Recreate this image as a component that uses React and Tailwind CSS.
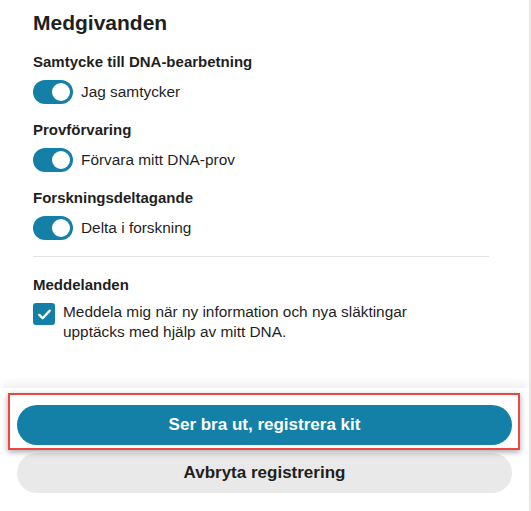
import React, { useState } from 'react';

function Toggle({ on, onClick }) {
  return (
    <button
      type="button"
      onClick={onClick}
      className={`relative flex h-[24px] w-[40px] shrink-0 items-center rounded-full px-[3px] ${
        on ? 'justify-end bg-[#1480a7]' : 'justify-start bg-[#c9c9c9]'
      }`}
    >
      <span className="block h-[18px] w-[18px] rounded-full bg-white" />
    </button>
  );
}

export default function App() {
  const [consent, setConsent] = useState({ dna: true, sample: true, research: true });
  const [notify, setNotify] = useState(true);

  const flip = (key) => setConsent((prev) => ({ ...prev, [key]: !prev[key] }));

  const items = [
    { key: 'dna', title: 'Samtycke till DNA-bearbetning', label: 'Jag samtycker' },
    { key: 'sample', title: 'Provförvaring', label: 'Förvara mitt DNA-prov' },
    { key: 'research', title: 'Forskningsdeltagande', label: 'Delta i forskning' },
  ];

  return (
    <div
      className="flex h-[511px] w-[531px] bg-[#ede8e2] text-[#1f1f1f]"
      style={{ fontFamily: '"Liberation Sans", Arial, sans-serif' }}
    >
      <div className="flex h-full w-[529px] flex-col bg-white">
        {/* Consent section */}
        <div className="flex-1 px-[33px] pt-[9px]">
          <h1 className="text-[21px] font-bold leading-[28px]">Medgivanden</h1>

          <div className="mt-[16px] flex flex-col gap-[17px]">
            {items.map((item) => (
              <div key={item.key}>
                <p className="text-[15px] font-bold leading-[18px]">{item.title}</p>
                <div className="mt-[9px] flex items-center gap-[8px]">
                  <Toggle on={consent[item.key]} onClick={() => flip(item.key)} />
                  <span className="text-[15.4px] leading-[20px]">{item.label}</span>
                </div>
              </div>
            ))}
          </div>

          <div className="mt-[16px] mr-[7px] h-px bg-[#e3e3e3]" />

          <p className="mt-[19px] text-[15px] font-bold leading-[18px]">Meddelanden</p>
          <label className="mt-[8px] flex cursor-pointer items-start gap-[8px]">
            <button
              type="button"
              onClick={() => setNotify(!notify)}
              className={`mt-[1px] flex h-[22px] w-[22px] shrink-0 items-center justify-center rounded-[3px] ${
                notify ? 'bg-[#1480a7]' : 'border-2 border-[#888] bg-white'
              }`}
            >
              {notify && (
                <svg width="15" height="15" viewBox="0 0 16 16" fill="none">
                  <path d="M2.5 8.5l3.5 3.5 7.5-8" stroke="white" strokeWidth="2.6" strokeLinecap="round" strokeLinejoin="round" />
                </svg>
              )}
            </button>
            <span className="max-w-[360px] text-[15.4px] leading-[20px]">
              Meddela mig när ny information och nya släktingar upptäcks med hjälp av mitt DNA.
            </span>
          </label>
        </div>

        {/* Action bar */}
        <div className="mb-[4px] flex flex-col gap-[8px] rounded-b-[10px] bg-white px-[17px] pb-[14px] pt-[17px] shadow-[0_-6px_10px_-2px_rgba(0,0,0,0.07)]">
          <div className="relative">
            <div className="absolute -bottom-[5px] -left-[9px] -right-[8px] -top-[12px] border-2 border-[#ea4747] shadow-[0_2px_6px_rgba(0,0,0,0.35)]" />
            <button
              type="button"
              className="relative h-[40px] w-full rounded-full bg-[#1480a7] text-[17px] font-bold text-white"
            >
              Ser bra ut, registrera kit
            </button>
          </div>
          <button
            type="button"
            className="h-[40px] w-full rounded-full bg-[#e9e9e9] text-[17px] font-bold text-[#1f1f1f]"
          >
            Avbryta registrering
          </button>
        </div>
      </div>
    </div>
  );
}
